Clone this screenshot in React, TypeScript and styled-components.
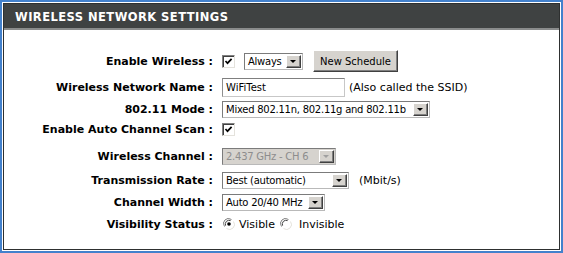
import React from 'react';
import styled, { createGlobalStyle } from 'styled-components';

const GlobalStyle = createGlobalStyle`
  body {
    margin: 0;
    background: #ffffff;
  }
`;

const Frame = styled.div`
  width: 563px;
  height: 253px;
  box-sizing: border-box;
  border: 2px solid #4381cc;
  padding: 1px;
  background: #ffffff;
  font-family: 'DejaVu Sans', Verdana, sans-serif;
`;

const Panel = styled.div`
  height: 100%;
  box-sizing: border-box;
  border: 1px solid #2e3030;
  display: flex;
  flex-direction: column;
`;

const Header = styled.div`
  height: 26px;
  box-sizing: border-box;
  background: #3f4242;
  border-bottom: 2px solid #8a8c8c;
  color: #ffffff;
  font-weight: bold;
  font-size: 11.5px;
  letter-spacing: 0.45px;
  display: flex;
  align-items: center;
  padding: 2px 0 0 11px;
`;

const Form = styled.div`
  display: flex;
  flex-direction: column;
  padding-top: 20px;
`;

const Row = styled.div<{ $h: number; $mt: number }>`
  display: flex;
  align-items: center;
  height: ${(p) => p.$h}px;
  margin-top: ${(p) => p.$mt}px;
`;

const Label = styled.div`
  width: 209px;
  flex: none;
  text-align: right;
  font-weight: bold;
  font-size: 11px;
  color: #000;
  white-space: nowrap;
`;

const Controls = styled.div`
  display: flex;
  align-items: center;
  margin-left: 9px;
`;

const Note = styled.span<{ $ml?: number }>`
  font-size: 11px;
  color: #000;
  margin-left: ${(p) => p.$ml ?? 0}px;
  white-space: nowrap;
`;

const CheckBox = styled.span<{ $ml?: number }>`
  width: 13px;
  height: 13px;
  box-sizing: border-box;
  margin-left: ${(p) => p.$ml ?? 0}px;
  border: 1px solid;
  border-color: #808080 #e4e2dc #e4e2dc #808080;
  box-shadow: inset 1px 1px 0 #404040;
  background: #ffffff;
  display: inline-flex;
  align-items: center;
  justify-content: center;
  flex: none;
`;

const SelectBox = styled.div<{ $w: number; $ml?: number; $disabled?: boolean }>`
  width: ${(p) => p.$w}px;
  height: 17px;
  box-sizing: border-box;
  margin-left: ${(p) => p.$ml ?? 0}px;
  border: 1px solid;
  border-color: #7b7b7b #b9b9b9 #b9b9b9 #7b7b7b;
  background: ${(p) => (p.$disabled ? '#d6d3ce' : '#ffffff')};
  color: ${(p) => (p.$disabled ? '#8d8d8d' : '#000000')};
  display: flex;
  align-items: center;
  font-size: 10px;
  letter-spacing: -0.25px;
  flex: none;
`;

const SelectValue = styled.span`
  flex: 1;
  padding-left: 3px;
  white-space: nowrap;
  overflow: hidden;
`;

const ArrowButton = styled.span<{ $disabled?: boolean }>`
  width: 15px;
  height: 13px;
  margin-right: 1px;
  box-sizing: border-box;
  background: #d6d3ce;
  border: 1px solid;
  border-color: #ffffff #404040 #404040 #ffffff;
  box-shadow: inset -1px -1px 0 #808080;
  display: flex;
  align-items: center;
  justify-content: center;
  flex: none;

  &::after {
    content: '';
    border-left: 3px solid transparent;
    border-right: 3px solid transparent;
    border-top: 3px solid ${(p) => (p.$disabled ? '#a0a0a0' : '#000000')};
    margin-top: 1px;
    margin-right: 1px;
  }
`;

const TextInput = styled.div`
  width: 123px;
  height: 19px;
  box-sizing: border-box;
  border: 1px solid;
  border-color: #7f7f7f #c7c7c7 #c7c7c7 #8f8f8f;
  background: #ffffff;
  font-size: 10px;
  color: #000;
  display: flex;
  align-items: center;
  padding-left: 3px;
  flex: none;
`;

const Button = styled.div<{ $ml?: number }>`
  width: 85px;
  height: 22px;
  box-sizing: border-box;
  margin-left: ${(p) => p.$ml ?? 0}px;
  background: #d6d3ce;
  border: 1px solid;
  border-color: #ffffff #404040 #404040 #ffffff;
  box-shadow: inset -1px -1px 0 #808080;
  font-size: 10px;
  color: #000;
  display: flex;
  align-items: center;
  justify-content: center;
  flex: none;
`;

const RadioWrap = styled.span<{ $ml?: number }>`
  display: inline-flex;
  width: 12px;
  height: 12px;
  margin-left: ${(p) => p.$ml ?? 0}px;
  flex: none;
`;

const Check: React.FC<{ ml?: number }> = ({ ml }) => (
  <CheckBox $ml={ml}>
    <svg width="9" height="9" viewBox="0 0 9 9">
      <path d="M1.5 4 L3.5 6.2 L7.6 1.8" fill="none" stroke="#000" strokeWidth="1.7" />
    </svg>
  </CheckBox>
);

const Radio: React.FC<{ checked?: boolean; ml?: number }> = ({ checked, ml }) => (
  <RadioWrap $ml={ml}>
    <svg width="12" height="12" viewBox="0 0 12 12">
      <circle cx="6" cy="6" r="5" fill="#fff" />
      <path d="M1.5 8.5 A5 5 0 0 1 8.5 1.5" fill="none" stroke="#808080" strokeWidth="1" />
      <path d="M2.6 7.6 A3.8 3.8 0 0 1 7.6 2.6" fill="none" stroke="#404040" strokeWidth="1" />
      <path d="M10.5 3.5 A5 5 0 0 1 3.5 10.5" fill="none" stroke="#e4e2dc" strokeWidth="1" />
      {checked ? <circle cx="6" cy="6" r="1.8" fill="#000" /> : null}
    </svg>
  </RadioWrap>
);

const Select: React.FC<{ w: number; value: string; ml?: number; disabled?: boolean }> = (props) => (
  <SelectBox $w={props.w} $ml={props.ml} $disabled={props.disabled}>
    <SelectValue>{props.value}</SelectValue>
    <ArrowButton $disabled={props.disabled} />
  </SelectBox>
);

export default function App() {
  return (
    <>
      <GlobalStyle />
      <Frame>
        <Panel>
          <Header>WIRELESS NETWORK SETTINGS</Header>
          <Form>
            <Row $h={22} $mt={0}>
              <Label>Enable Wireless :</Label>
              <Controls>
                <Check />
                <Select w={59} ml={9} value="Always" />
                <Button $ml={10}>New Schedule</Button>
              </Controls>
            </Row>
            <Row $h={18} $mt={6}>
              <Label>Wireless Network Name :</Label>
              <Controls>
                <TextInput>WiFiTest</TextInput>
                <Note $ml={4}>(Also called the SSID)</Note>
              </Controls>
            </Row>
            <Row $h={18} $mt={4}>
              <Label>802.11 Mode :</Label>
              <Controls>
                <Select w={208} value="Mixed 802.11n, 802.11g and 802.11b" />
              </Controls>
            </Row>
            <Row $h={18} $mt={2}>
              <Label>Enable Auto Channel Scan :</Label>
              <Controls>
                <Check />
              </Controls>
            </Row>
            <Row $h={18} $mt={9}>
              <Label>Wireless Channel :</Label>
              <Controls>
                <Select w={114} value="2.437 GHz - CH 6" disabled />
              </Controls>
            </Row>
            <Row $h={18} $mt={6}>
              <Label>Transmission Rate :</Label>
              <Controls>
                <Select w={127} value="Best (automatic)" />
                <Note $ml={10}>(Mbit/s)</Note>
              </Controls>
            </Row>
            <Row $h={18} $mt={4}>
              <Label>Channel Width :</Label>
              <Controls>
                <Select w={103} value="Auto 20/40 MHz" />
              </Controls>
            </Row>
            <Row $h={18} $mt={4}>
              <Label>Visibility Status :</Label>
              <Controls>
                <Radio checked ml={1} />
                <Note $ml={4}>Visible</Note>
                <Radio ml={5} />
                <Note $ml={7}>Invisible</Note>
              </Controls>
            </Row>
          </Form>
        </Panel>
      </Frame>
    </>
  );
}
